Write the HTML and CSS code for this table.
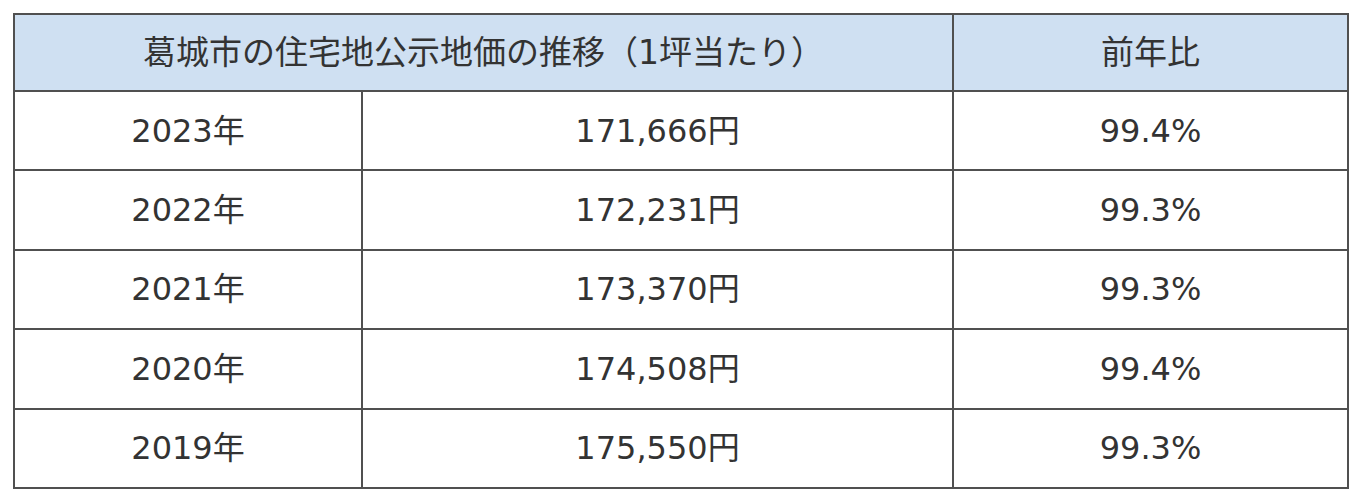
FILE: index.html
```html
<!DOCTYPE html>
<html lang="ja">
<head>
<meta charset="utf-8">
<link rel="stylesheet" href="styles.css">
</head>
<body>
<table class="price-table">
  <colgroup>
    <col class="c1"><col class="c2"><col class="c3">
  </colgroup>
  <thead>
    <tr><th colspan="2">葛城市の住宅地公示地価の推移（1坪当たり）</th><th>前年比</th></tr>
  </thead>
  <tbody>
    <tr><td>2023年</td><td>171,666円</td><td>99.4%</td></tr>
    <tr><td>2022年</td><td>172,231円</td><td>99.3%</td></tr>
    <tr><td>2021年</td><td>173,370円</td><td>99.3%</td></tr>
    <tr><td>2020年</td><td>174,508円</td><td>99.4%</td></tr>
    <tr><td>2019年</td><td>175,550円</td><td>99.3%</td></tr>
  </tbody>
</table>
</body>
</html>
```

FILE: styles.css
```css
html, body {
  margin: 0;
  padding: 0;
  background: #ffffff;
}
body {
  padding: 13px 0 0 13px;
  font-family: "DejaVu Sans", "Noto Sans CJK JP", sans-serif;
  color: #333333;
}
.price-table {
  border-collapse: collapse;
  width: 1334px;
  table-layout: fixed;
}
.c1 { width: 348px; }
.c2 { width: 591px; }
.c3 { width: 395px; }
.price-table th,
.price-table td {
  border: 2px solid #505050;
  text-align: center;
  font-size: 32px;
  line-height: 40px;
  font-weight: normal;
  padding: 0;
}
.price-table th {
  background: #cfe0f2;
  height: 75px;
  font-size: 33px;
}
.price-table td {
  height: 77.4px;
}
```
